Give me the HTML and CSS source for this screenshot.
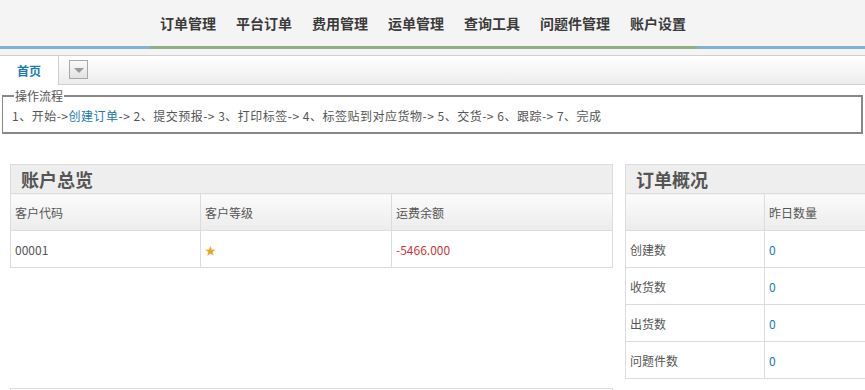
FILE: index.html
```html
<!DOCTYPE html>
<html lang="zh-CN">

<head>
    <meta charset="UTF-8" />
    <title>首页</title>
    <link rel="stylesheet" href="styles.css">
</head>

<body>
    <div class="header">
        <ul class="nav">
            <li>订单管理</li>
            <li>平台订单</li>
            <li>费用管理</li>
            <li>运单管理</li>
            <li>查询工具</li>
            <li>问题件管理</li>
            <li>账户设置</li>
        </ul>
    </div>
    <div class="color-bar">
        <span class="blue left"></span>
        <span class="green"></span>
        <span class="blue right"></span>
    </div>

    <div class="tabs">
        <div class="tab active">首页</div>
        <div class="tab-rest">
            <span class="drop"><span class="arrow"></span></span>
        </div>
    </div>

    <fieldset class="flow">
        <legend>操作流程</legend>
        1、开始-&gt;<a class="link">创建订单</a>-&gt; 2、提交预报-&gt; 3、打印标签-&gt; 4、标签贴到对应货物-&gt; 5、交货-&gt; 6、跟踪-&gt; 7、完成
    </fieldset>

    <div class="panels">
        <div class="left-col">
            <div class="panel">
                <div class="panel-title">账户总览</div>
                <table class="grid">
                    <tr class="head">
                        <td class="c1">客户代码</td>
                        <td class="c2">客户等级</td>
                        <td>运费余额</td>
                    </tr>
                    <tr>
                        <td>00001</td>
                        <td><span class="star">★</span></td>
                        <td class="red">-5466.000</td>
                    </tr>
                </table>
            </div>
            <div class="panel next"></div>
        </div>

        <div class="panel right-panel">
            <div class="panel-title">订单概况</div>
            <table class="grid">
                <tr class="head">
                    <td class="o1"></td>
                    <td>昨日数量</td>
                </tr>
                <tr><td>创建数</td><td class="num">0</td></tr>
                <tr><td>收货数</td><td class="num">0</td></tr>
                <tr><td>出货数</td><td class="num">0</td></tr>
                <tr><td>问题件数</td><td class="num">0</td></tr>
            </table>
        </div>
    </div>
</body>

</html>
```

FILE: styles.css
```css
body {
    margin: 0;
    background: white;
    color: #444;
    font-family: "Noto Sans CJK SC", "Liberation Sans", sans-serif;
    font-size: 12px;
    overflow: hidden;
}

.header {
    height: 46px;
    background: #f4f4f4;
}

.nav {
    margin: 0;
    padding: 0 0 0 160px;
    list-style: none;
    display: flex;
    gap: 20px;
    height: 46px;
    align-items: center;
}

.nav li {
    font-size: 14px;
    font-weight: bold;
    color: #3a3a3a;
}

.color-bar {
    display: flex;
    height: 3px;
    background: #f4f4f4;
    padding-bottom: 6px;
    border-bottom: 1px solid #d0d0d0;
}

.color-bar span {
    display: block;
    height: 3px;
}

.blue {
    background: #82b1d6;
}

.left {
    width: 150px;
}

.green {
    width: 547px;
    background: #8eb183;
}

.right {
    flex: 1;
}

.tabs {
    display: flex;
    height: 29px;
}

.tab {
    width: 58px;
    text-align: center;
    line-height: 29px;
    color: #1a7bb0;
    font-weight: bold;
    background: white;
    border-right: 1px solid #cfcfcf;
}

.tab-rest {
    flex: 1;
    background: linear-gradient(#ffffff, #ececec);
    border-bottom: 1px solid #cfcfcf;
    padding: 4px 0 0 10px;
}

.drop {
    display: block;
    width: 17px;
    height: 17px;
    border: 1px solid #a8a8a8;
    background: linear-gradient(#fafafa, #e2e2e2);
    position: relative;
}

.arrow {
    position: absolute;
    left: 4px;
    top: 7px;
    border-left: 5px solid transparent;
    border-right: 5px solid transparent;
    border-top: 5px solid #999;
}

.flow {
    margin: 1px 2px 0 2px;
    padding: 0 10px 6px 9px;
    border: 2px solid #888;
    border-width: 2px 2px 2px 1px;
    color: #555;
    line-height: 20px;
    letter-spacing: 0.5px;
}

.flow legend {
    padding: 0 1px;
    margin-left: 2px;
    color: #555;
    letter-spacing: 0;
}

.link {
    color: #1a7bb0;
}

.panels {
    display: flex;
    align-items: flex-start;
    gap: 12px;
    margin: 30px 0 0 10px;
}

.left-col {
    width: 603px;
}

.panel {
    border: 1px solid #dcdcdc;
    border-bottom: none;
}

.panel-title {
    height: 28px;
    line-height: 28px;
    padding-left: 10px;
    background: #eeeeee;
    color: #555;
    font-size: 18px;
    font-weight: bold;
}

.grid {
    width: 100%;
    border-collapse: collapse;
}

.grid td {
    height: 36px;
    padding: 0 4px;
    border-top: 1px solid #dcdcdc;
    border-bottom: 1px solid #dcdcdc;
    border-left: 1px solid #dcdcdc;
    color: #555;
}

.grid td:first-child {
    border-left: none;
}

.grid .head td {
    background: linear-gradient(#fbfbfb, #ececec);
}

.c1 {
    width: 181px;
}

.c2 {
    width: 182px;
}

.star {
    color: #f0a020;
    font-size: 11px;
}

.red {
    color: #cc3a36 !important;
}

.right-panel {
    flex: 1;
    border-right: none;
}

.o1 {
    width: 130px;
}

.num {
    color: #1a7bb0 !important;
}

.next {
    margin-top: 120px;
    height: 10px;
}
```
